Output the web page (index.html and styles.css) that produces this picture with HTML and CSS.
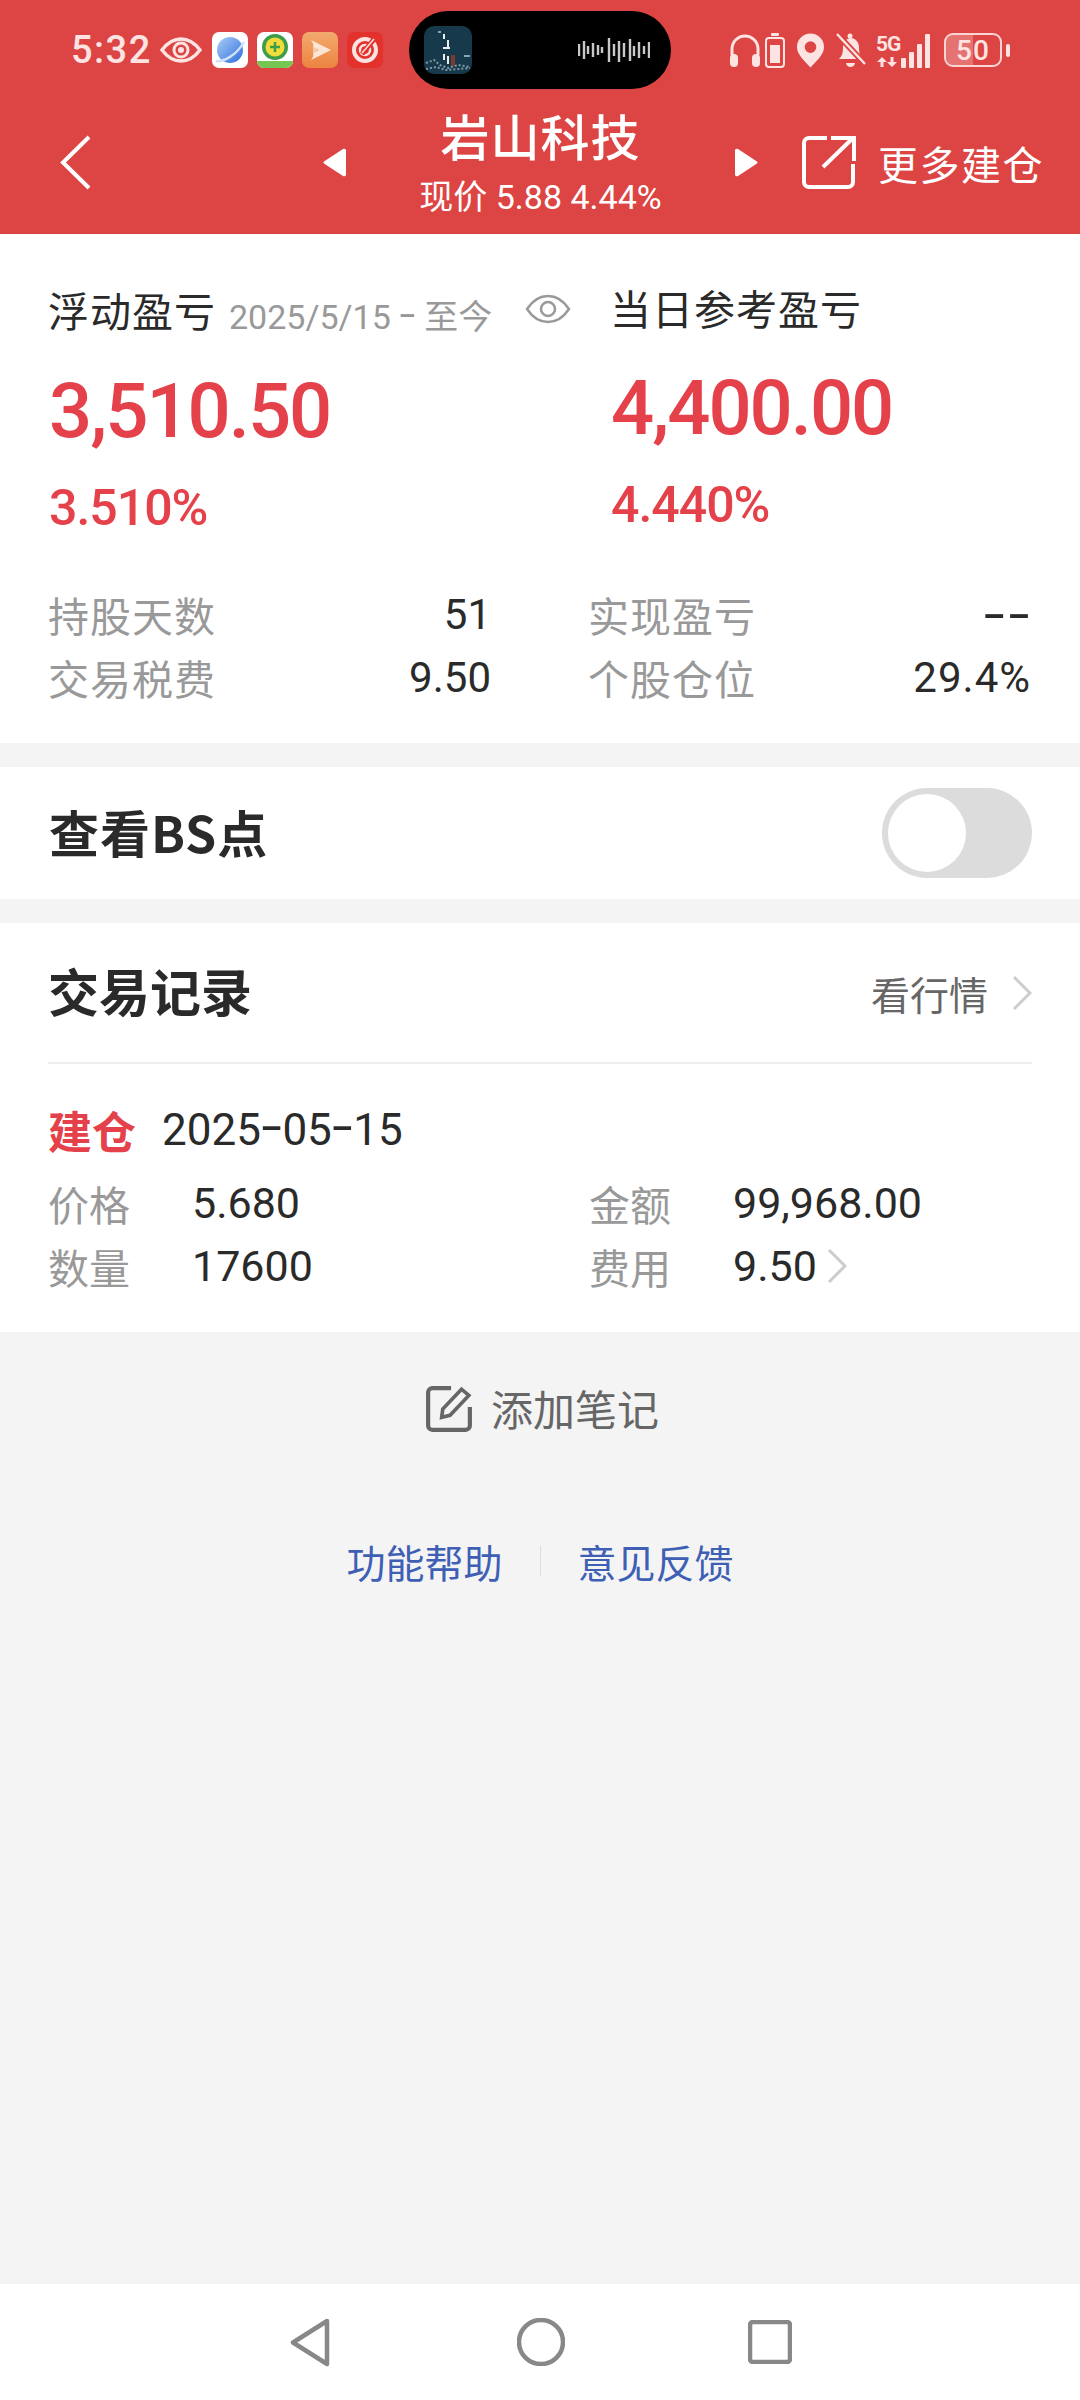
FILE: index.html
```html
<!DOCTYPE html>
<html lang="zh-CN">
<head>
    <meta charset="UTF-8">
    <meta name="viewport" content="width=device-width, initial-scale=1.0">
    <title>岩山科技</title>
    <link rel="stylesheet" href="styles.css">
</head>
<body>
<div class="page">

    <header class="top">
        <div class="status">
            <div class="status-left">
                <span class="clock">5:32</span>
                <svg class="st-eye" viewBox="0 0 42 26"><path d="M2 13C8 5 14 2 21 2s13 3 19 11c-6 8-12 11-19 11S8 21 2 13z" fill="none" stroke="#fde3e2" stroke-width="3.500"/><circle cx="21" cy="13" r="7" fill="none" stroke="#fde3e2" stroke-width="3"/><circle cx="21" cy="13" r="3" fill="#fde3e2"/></svg>
                <svg class="app" viewBox="0 0 36 36"><defs><linearGradient id="pl" x1="0" y1="0" x2="1" y2="1"><stop offset="0" stop-color="#a9cdf6"/><stop offset="1" stop-color="#2f6fdc"/></linearGradient></defs><rect width="36" height="36" rx="7" fill="#fff"/><circle cx="18" cy="18" r="13" fill="url(#pl)"/><path d="M4 29c7 1 20-5 28-19" fill="none" stroke="#cfe0fa" stroke-width="2.500"/></svg>
                <svg class="app" viewBox="0 0 36 36"><rect width="36" height="36" rx="7" fill="#fff"/><path d="M0 29h36v0a7 7 0 01-7 7H7a7 7 0 01-7-7z" fill="#76c652"/><circle cx="18" cy="15" r="13" fill="#3e9c4a"/><circle cx="18" cy="15" r="9.500" fill="#f1dc3a"/><path d="M18 10v10M13 15h10" stroke="#3e9c4a" stroke-width="2.500"/></svg>
                <svg class="app" viewBox="0 0 36 36"><defs><linearGradient id="og" x1="0" y1="0" x2="0" y2="1"><stop offset="0" stop-color="#f3aa6e"/><stop offset="1" stop-color="#ec8341"/></linearGradient></defs><rect width="36" height="36" rx="7" fill="url(#og)"/><path d="M9 8l20 10-20 10c2-3 3-5 2-7l6-3-6-3c1-2 0-4-2-7z" fill="#fbe6d6"/><path d="M11 15l6 3-6 3z" fill="#f7c9a6"/></svg>
                <svg class="app" viewBox="0 0 36 36"><rect width="36" height="36" rx="7" fill="#e3322c"/><circle cx="18" cy="18" r="11" fill="none" stroke="#fbe3e1" stroke-width="4"/><circle cx="18" cy="18" r="5" fill="none" stroke="#fbe3e1" stroke-width="2.500"/><path d="M15 22L28 6" stroke="#e3322c" stroke-width="5"/><path d="M15 21L27 7" stroke="#fbe3e1" stroke-width="1.500"/></svg>
            </div>
            <div class="island">
                <svg class="thumb" viewBox="0 0 48 48"><rect width="48" height="48" rx="10" fill="#163a4c"/><path d="M20 8v5M24 14v8M19 22h7M20 28v6M24 30v8" stroke="#e8eef0" stroke-width="2"/><rect x="27" y="29" width="4" height="11" fill="#7a3a30"/><path d="M2 37l8-3 6 5 8 3 10-3 12 2M2 43l10-2 10 3 24-2" fill="none" stroke="#7f98a2" stroke-width="2" stroke-dasharray="2 2"/><path d="M40 30h6M14 6h3" stroke="#b8c6cc" stroke-width="1.500"/></svg>
                <svg class="wave" viewBox="0 0 72 24"><path d="M1 6v12M6 3v18M10 8v8M15 5v14M20 7v10M24 9v6M31 0v24M36 6v12M41 3v21M46 5v14M52 1v22M56 8v10M61 4v16M66 8v8M71 4v16" stroke="#c9c9c9" stroke-width="2.400"/></svg>
            </div>
            <div class="status-right">
                <svg class="ic-phones" viewBox="0 0 32 34"><path d="M3 22v-6a13 13 0 0126 0v6" fill="none" stroke="#fde3e2" stroke-width="3"/><rect x="1" y="21" width="8" height="13" rx="4" fill="#fde3e2"/><rect x="23" y="21" width="8" height="13" rx="4" fill="#fde3e2"/></svg>
                <svg class="ic-cell" viewBox="0 0 20 35"><rect x="6" y="0" width="8" height="3" rx="1" fill="#fde3e2"/><rect x="1" y="5" width="18" height="29" rx="3" fill="none" stroke="#fde3e2" stroke-width="2"/><rect x="5" y="12" width="10" height="18" fill="#fde3e2"/></svg>
                <svg class="ic-pin" viewBox="0 0 30 35"><path fill-rule="evenodd" d="M15 35C7 27 1 21 1 14a14 14 0 0128 0c0 7-6 13-14 21zm0-15a6 6 0 100-12 6 6 0 000 12z" fill="#fde3e2"/></svg>
                <svg class="ic-bell" viewBox="0 0 32 36"><path d="M4 27c3-3 4-6 4-12 0-5 4-9 8-9s8 4 8 9c0 6 1 9 4 12z" fill="#fde3e2"/><circle cx="15" cy="4" r="2.500" fill="#fde3e2"/><path d="M11 31h9a4.500 4 0 01-9 0z" fill="#fde3e2"/><path d="M2 2l28 30" stroke="#dc4543" stroke-width="6"/><path d="M2 2l28 30" stroke="#fde3e2" stroke-width="2.400"/></svg>
                <div class="net">
                    <div class="net-type">
                        <span class="net-5g">5G</span>
                        <svg class="net-arrows" viewBox="0 0 22 10"><path d="M6 0L1 5h3.500v5h3V5H11zM16 10l5-5h-3.500V0h-3v5H11z" fill="#fde3e2"/></svg>
                    </div>
                    <div class="bars"><i class="b1"></i><i class="b2"></i><i class="b3"></i><i class="b4"></i></div>
                </div>
                <div class="batt"><div class="batt-fill"></div><span class="batt-num">50</span></div>
                <i class="batt-nub"></i>
            </div>
        </div>
        <div class="nav">
            <svg class="back" viewBox="0 0 31 55"><path d="M29 2L3 27.500 29 53" fill="none" stroke="#fff" stroke-width="4"/></svg>
            <svg class="tri" viewBox="0 0 25 31"><path d="M22 2L3 14.500a1.500 1.500 0 000 2L22 29a2 2 0 003-2V4a2 2 0 00-3-2z" fill="#fff"/></svg>
            <div class="nav-title">
                <div class="stock">岩山科技</div>
                <div class="quote">现价 5.88 4.44%</div>
            </div>
            <svg class="tri" viewBox="0 0 25 31"><path d="M3 2l19 12.500a1.500 1.500 0 010 2L3 29a2 2 0 01-3-2V4a2 2 0 013-2z" fill="#fff"/></svg>
            <div class="more">
                <svg class="share" viewBox="0 0 55 55"><path d="M26 3H8a5 5 0 00-5 5v39a5 5 0 005 5h39a5 5 0 005-5V29" fill="none" stroke="#fff" stroke-width="4"/><path d="M22 32L52 3M30 3h23v23" fill="none" stroke="#fff" stroke-width="4"/></svg>
                <span>更多建仓</span>
            </div>
        </div>
    </header>

    <section class="card summary">
        <div class="pnl">
            <div class="pnl-col pnl-left">
                <div class="pnl-head">
                    <span class="pnl-name">浮动盈亏</span>
                    <span class="pnl-date">2025/5/15 <span class="dash">-</span> 至今</span>
                    <svg class="eye" viewBox="0 0 46 30"><path d="M2 15C8 6 15 2 23 2s15 4 21 13c-6 9-13 13-21 13S8 24 2 15z" fill="none" stroke="#999" stroke-width="2.500"/><circle cx="23" cy="15" r="7" fill="none" stroke="#999" stroke-width="2.500"/></svg>
                </div>
                <div class="pnl-num">3,510.50</div>
                <div class="pnl-pct">3.510%</div>
            </div>
            <div class="pnl-col pnl-right">
                <div class="pnl-head"><span class="pnl-name">当日参考盈亏</span></div>
                <div class="pnl-num">4,400.00</div>
                <div class="pnl-pct">4.440%</div>
            </div>
        </div>
        <div class="stats">
            <div class="stat"><span class="label">持股天数</span><span class="val">51</span></div>
            <div class="stat"><span class="label">实现盈亏</span><span class="val val-none">--</span></div>
            <div class="stat"><span class="label">交易税费</span><span class="val">9.50</span></div>
            <div class="stat"><span class="label">个股仓位</span><span class="val val-wide">29.4%</span></div>
        </div>
    </section>

    <section class="card bs-row">
        <span class="bs-title">查看BS点</span>
        <div class="toggle"><div class="knob"></div></div>
    </section>

    <section class="card trades">
        <div class="trades-head">
            <span class="trades-title">交易记录</span>
            <div class="market">
                <span>看行情</span>
                <svg class="chev" viewBox="0 0 20 36"><path d="M2 2l16 16L2 34" fill="none" stroke="#ccc" stroke-width="3"/></svg>
            </div>
        </div>
        <div class="trade">
            <div class="trade-top"><span class="trade-type">建仓</span><span class="trade-date">2025<span class="dash">-</span>05<span class="dash">-</span>15</span></div>
            <div class="trade-grid">
                <div class="cell"><span class="label">价格</span><span class="cell-val">5.680</span></div>
                <div class="cell"><span class="label">金额</span><span class="cell-val">99,968.00</span></div>
                <div class="cell"><span class="label">数量</span><span class="cell-val">17600</span></div>
                <div class="cell">
                    <span class="label">费用</span><span class="cell-val">9.50</span>
                    <svg class="chev chev-fee" viewBox="0 0 20 36"><path d="M2 2l16 16L2 34" fill="none" stroke="#ccc" stroke-width="3"/></svg>
                </div>
            </div>
        </div>
    </section>

    <main class="rest">
        <div class="note">
            <svg class="note-ic" viewBox="0 0 46 46"><path d="M25 3H7a4 4 0 00-4 4v32a4 4 0 004 4h32a4 4 0 004-4V21" fill="none" stroke="#666" stroke-width="4"/><path d="M16 31l1-8L35 4l7 6-18 19z" fill="none" stroke="#666" stroke-width="3.500"/></svg>
            <span class="note-text">添加笔记</span>
        </div>
        <div class="links">
            <span>功能帮助</span>
            <i class="link-sep"></i>
            <span>意见反馈</span>
        </div>
    </main>

    <footer class="sysnav">
        <svg class="sys-back" viewBox="0 0 42 49"><path d="M38 3L4 24.500 38 46z" fill="none" stroke="#888" stroke-width="4.500" stroke-linejoin="round"/></svg>
        <svg class="sys-home" viewBox="0 0 48 48"><circle cx="24" cy="24" r="22" fill="none" stroke="#888" stroke-width="4.500"/></svg>
        <svg class="sys-recent" viewBox="0 0 44 44"><rect x="2" y="2" width="40" height="40" rx="3" fill="none" stroke="#888" stroke-width="4.500"/></svg>
    </footer>

</div>
</body>
</html>
```

FILE: styles.css
```css
* {
    box-sizing: border-box;
}
body {
    margin: 0;
    font-family: "Noto Sans CJK SC", "Noto Sans", sans-serif;
    color: #2a2a2a;
    background-color: #f4f4f4;
}
.page {
    width: 1080px;
    height: 2400px;
    display: flex;
    flex-direction: column;
}
.card {
    background-color: #fff;
}
.dash {
    font-size: 1.7em;
    font-weight: 300;
    line-height: 0;
    vertical-align: -0.08em;
}

/* red header */
.top {
    height: 234px;
    background-color: #dc4543;
    color: #fff;
}
.status {
    height: 100px;
    padding: 11px 0 0 71px;
    display: flex;
    align-items: flex-start;
}
.status-left {
    width: 338px;
    height: 78px;
    display: flex;
    align-items: center;
}
.clock {
    width: 89px;
    font-family: Roboto, sans-serif;
    font-size: 38px;
    font-weight: 500;
    letter-spacing: 1.500px;
    color: #fde3e2;
}
.st-eye {
    width: 42px;
    height: 26px;
    margin-right: 10px;
}
.app {
    width: 36px;
    height: 36px;
    margin-right: 9px;
}
.island {
    width: 262px;
    height: 78px;
    padding: 0 21px 0 15px;
    border-radius: 39px;
    background-color: #000;
    display: flex;
    justify-content: space-between;
    align-items: center;
}
.thumb {
    width: 48px;
    height: 48px;
}
.wave {
    width: 72px;
    height: 24px;
}
.status-right {
    margin-left: 58px;
    height: 78px;
    display: flex;
    align-items: center;
}
.ic-phones {
    width: 32px;
    height: 34px;
    margin-right: 4px;
}
.ic-cell {
    width: 20px;
    height: 35px;
    margin-right: 11px;
}
.ic-pin {
    width: 29px;
    height: 35px;
    margin-right: 10px;
}
.ic-bell {
    width: 32px;
    height: 36px;
    margin-right: 9px;
}
.net {
    width: 55px;
    height: 35px;
    margin-right: 13px;
    display: flex;
    align-items: flex-end;
}
.net-type {
    width: 24px;
    height: 35px;
    display: flex;
    flex-direction: column;
}
.net-5g {
    height: 22px;
    font-family: Roboto, sans-serif;
    font-size: 21px;
    line-height: 22px;
    font-weight: 700;
    letter-spacing: -1px;
    color: #fde3e2;
}
.net-arrows {
    width: 22px;
    height: 10px;
    margin-top: 2px;
}
.bars {
    margin-left: 1px;
    display: flex;
    align-items: flex-end;
    gap: 3px;
}
.bars i {
    width: 5px;
    border-radius: 1px;
    background-color: #fde3e2;
}
.b1 { height: 10px; }
.b2 { height: 16px; }
.b3 { height: 24px; }
.b4 { height: 34px; }
.batt {
    position: relative;
    width: 58px;
    height: 34px;
    border: 2.500px solid #fbd5d4;
    border-radius: 9px;
    overflow: hidden;
    display: flex;
    align-items: center;
    justify-content: center;
}
.batt-fill {
    position: absolute;
    left: 0;
    top: 0;
    bottom: 0;
    width: 50%;
    background-color: rgba(255, 255, 255, 0.25);
}
.batt-num {
    position: relative;
    font-family: Roboto, sans-serif;
    font-size: 28px;
    font-weight: 500;
    letter-spacing: 1px;
    color: #fde3e2;
}
.batt-nub {
    width: 4px;
    height: 13px;
    margin-left: 4px;
    border-radius: 2px;
    background-color: #fde3e2;
}
.nav {
    height: 134px;
    padding-left: 60px;
    display: flex;
    align-items: center;
}
.back {
    width: 31px;
    height: 55px;
    margin: -10px 230px 0 0;
}
.tri {
    width: 25px;
    height: 31px;
    margin-top: -9px;
}
.nav-title {
    width: 389px;
    align-self: flex-start;
    margin-top: 5px;
    text-align: center;
}
.stock {
    height: 60px;
    font-size: 49px;
    line-height: 60px;
    font-weight: 500;
    letter-spacing: 1px;
}
.quote {
    height: 38px;
    margin-top: 13px;
    font-size: 34px;
    line-height: 38px;
    font-family: Roboto, "Noto Sans CJK SC", sans-serif;
}
.more {
    margin-left: 41px;
    margin-top: -9px;
    display: flex;
    align-items: center;
    gap: 22px;
    font-size: 40px;
    letter-spacing: 1.500px;
}
.share {
    width: 55px;
    height: 55px;
}

/* summary */
.summary {
    height: 509px;
    padding: 48px 49px 0 48px;
}
.pnl {
    display: flex;
}
.pnl-col {
    display: flex;
    flex-direction: column;
}
.pnl-left {
    width: 562px;
    padding-top: 2px;
}
.pnl-head {
    height: 50px;
    display: flex;
    align-items: center;
}
.pnl-name {
    font-size: 41px;
    line-height: 50px;
    letter-spacing: 1px;
}
.pnl-date {
    margin: 10px 0 0 13px;
    font-size: 34px;
    color: #999;
    font-family: Roboto, "Noto Sans CJK SC", sans-serif;
}
.eye {
    width: 46px;
    height: 30px;
    margin-left: 33px;
}
.pnl-num {
    height: 80px;
    margin-left: 1px;
    font-family: Roboto, sans-serif;
    font-size: 76px;
    line-height: 80px;
    font-weight: 500;
    letter-spacing: -2px;
    color: #e5414a;
}
.pnl-pct {
    height: 50px;
    margin-left: 1px;
    font-family: Roboto, sans-serif;
    font-size: 50px;
    line-height: 50px;
    font-weight: 500;
    letter-spacing: -1px;
    color: #e5414a;
}
.pnl-left .pnl-num { margin-top: 37px; }
.pnl-left .pnl-pct { margin-top: 32px; }
.pnl-right .pnl-num { margin-top: 36px; }
.pnl-right .pnl-pct { margin-top: 32px; }
.stats {
    margin-top: 56px;
    display: grid;
    grid-template-columns: 443px 443px;
    column-gap: 97px;
    row-gap: 13px;
}
.stat {
    height: 50px;
    display: flex;
    justify-content: space-between;
    align-items: center;
}
.label {
    font-size: 41px;
    line-height: 50px;
    letter-spacing: 1px;
    color: #999;
}
.val {
    font-family: Roboto, sans-serif;
    font-size: 42px;
}
.val-none {
    font-size: 76px;
    font-weight: 300;
    line-height: 50px;
    letter-spacing: 3px;
    margin-right: -2px;
}
.val-wide {
    letter-spacing: 1px;
}

/* BS toggle */
.bs-row {
    height: 132px;
    margin-top: 24px;
    padding: 0 48px 0 49px;
    display: flex;
    justify-content: space-between;
    align-items: center;
}
.bs-title {
    padding-bottom: 5px;
    font-size: 50px;
    font-weight: 700;
    letter-spacing: 1px;
}
.toggle {
    width: 150px;
    height: 90px;
    padding: 6px;
    border-radius: 45px;
    background-color: #dcdcdc;
}
.knob {
    width: 78px;
    height: 78px;
    border-radius: 50%;
    background-color: #fff;
}

/* trade records */
.trades {
    height: 409px;
    margin-top: 24px;
    padding: 0 48px;
}
.trades-head {
    height: 141px;
    border-bottom: 2px solid #eee;
    display: flex;
    justify-content: space-between;
    align-items: center;
}
.trades-title {
    padding-bottom: 5px;
    font-size: 51px;
    font-weight: 700;
}
.market {
    display: flex;
    align-items: center;
    gap: 24px;
    font-size: 39px;
    color: #666;
}
.chev {
    width: 20px;
    height: 36px;
}
.trade-top {
    height: 60px;
    margin-top: 36px;
    display: flex;
    align-items: center;
    gap: 26px;
}
.trade-type {
    font-size: 44px;
    font-weight: 700;
    color: #e5414a;
}
.trade-date {
    font-family: Roboto, sans-serif;
    font-size: 44px;
}
.trade-grid {
    margin-top: 18px;
    display: grid;
    grid-template-columns: 541px 1fr;
    row-gap: 13px;
}
.cell {
    height: 50px;
    display: flex;
    align-items: center;
}
.cell .label {
    width: 144px;
    letter-spacing: 0;
}
.cell-val {
    font-family: Roboto, sans-serif;
    font-size: 43px;
}
.chev-fee {
    margin-left: 10px;
}

/* bottom area */
.rest {
    flex: 1;
}
.note {
    margin-top: 52px;
    margin-left: 4px;
    height: 50px;
    display: flex;
    justify-content: center;
    align-items: center;
    gap: 18px;
    font-size: 42px;
    color: #666;
}
.note-ic {
    width: 48px;
    height: 48px;
}
.note-text {
    padding-bottom: 4px;
}
.links {
    margin-top: 104px;
    height: 46px;
    display: flex;
    justify-content: center;
    align-items: center;
    gap: 37px;
    font-size: 39px;
    color: #3f5fb5;
}
.link-sep {
    width: 1px;
    height: 30px;
    background-color: #ddd;
}
.sysnav {
    height: 116px;
    background-color: #fff;
    display: flex;
    justify-content: center;
    align-items: center;
}
.sys-back {
    width: 42px;
    height: 49px;
    margin-right: 186px;
}
.sys-home {
    width: 48px;
    height: 48px;
    margin-right: 183px;
}
.sys-recent {
    width: 44px;
    height: 44px;
}
```
